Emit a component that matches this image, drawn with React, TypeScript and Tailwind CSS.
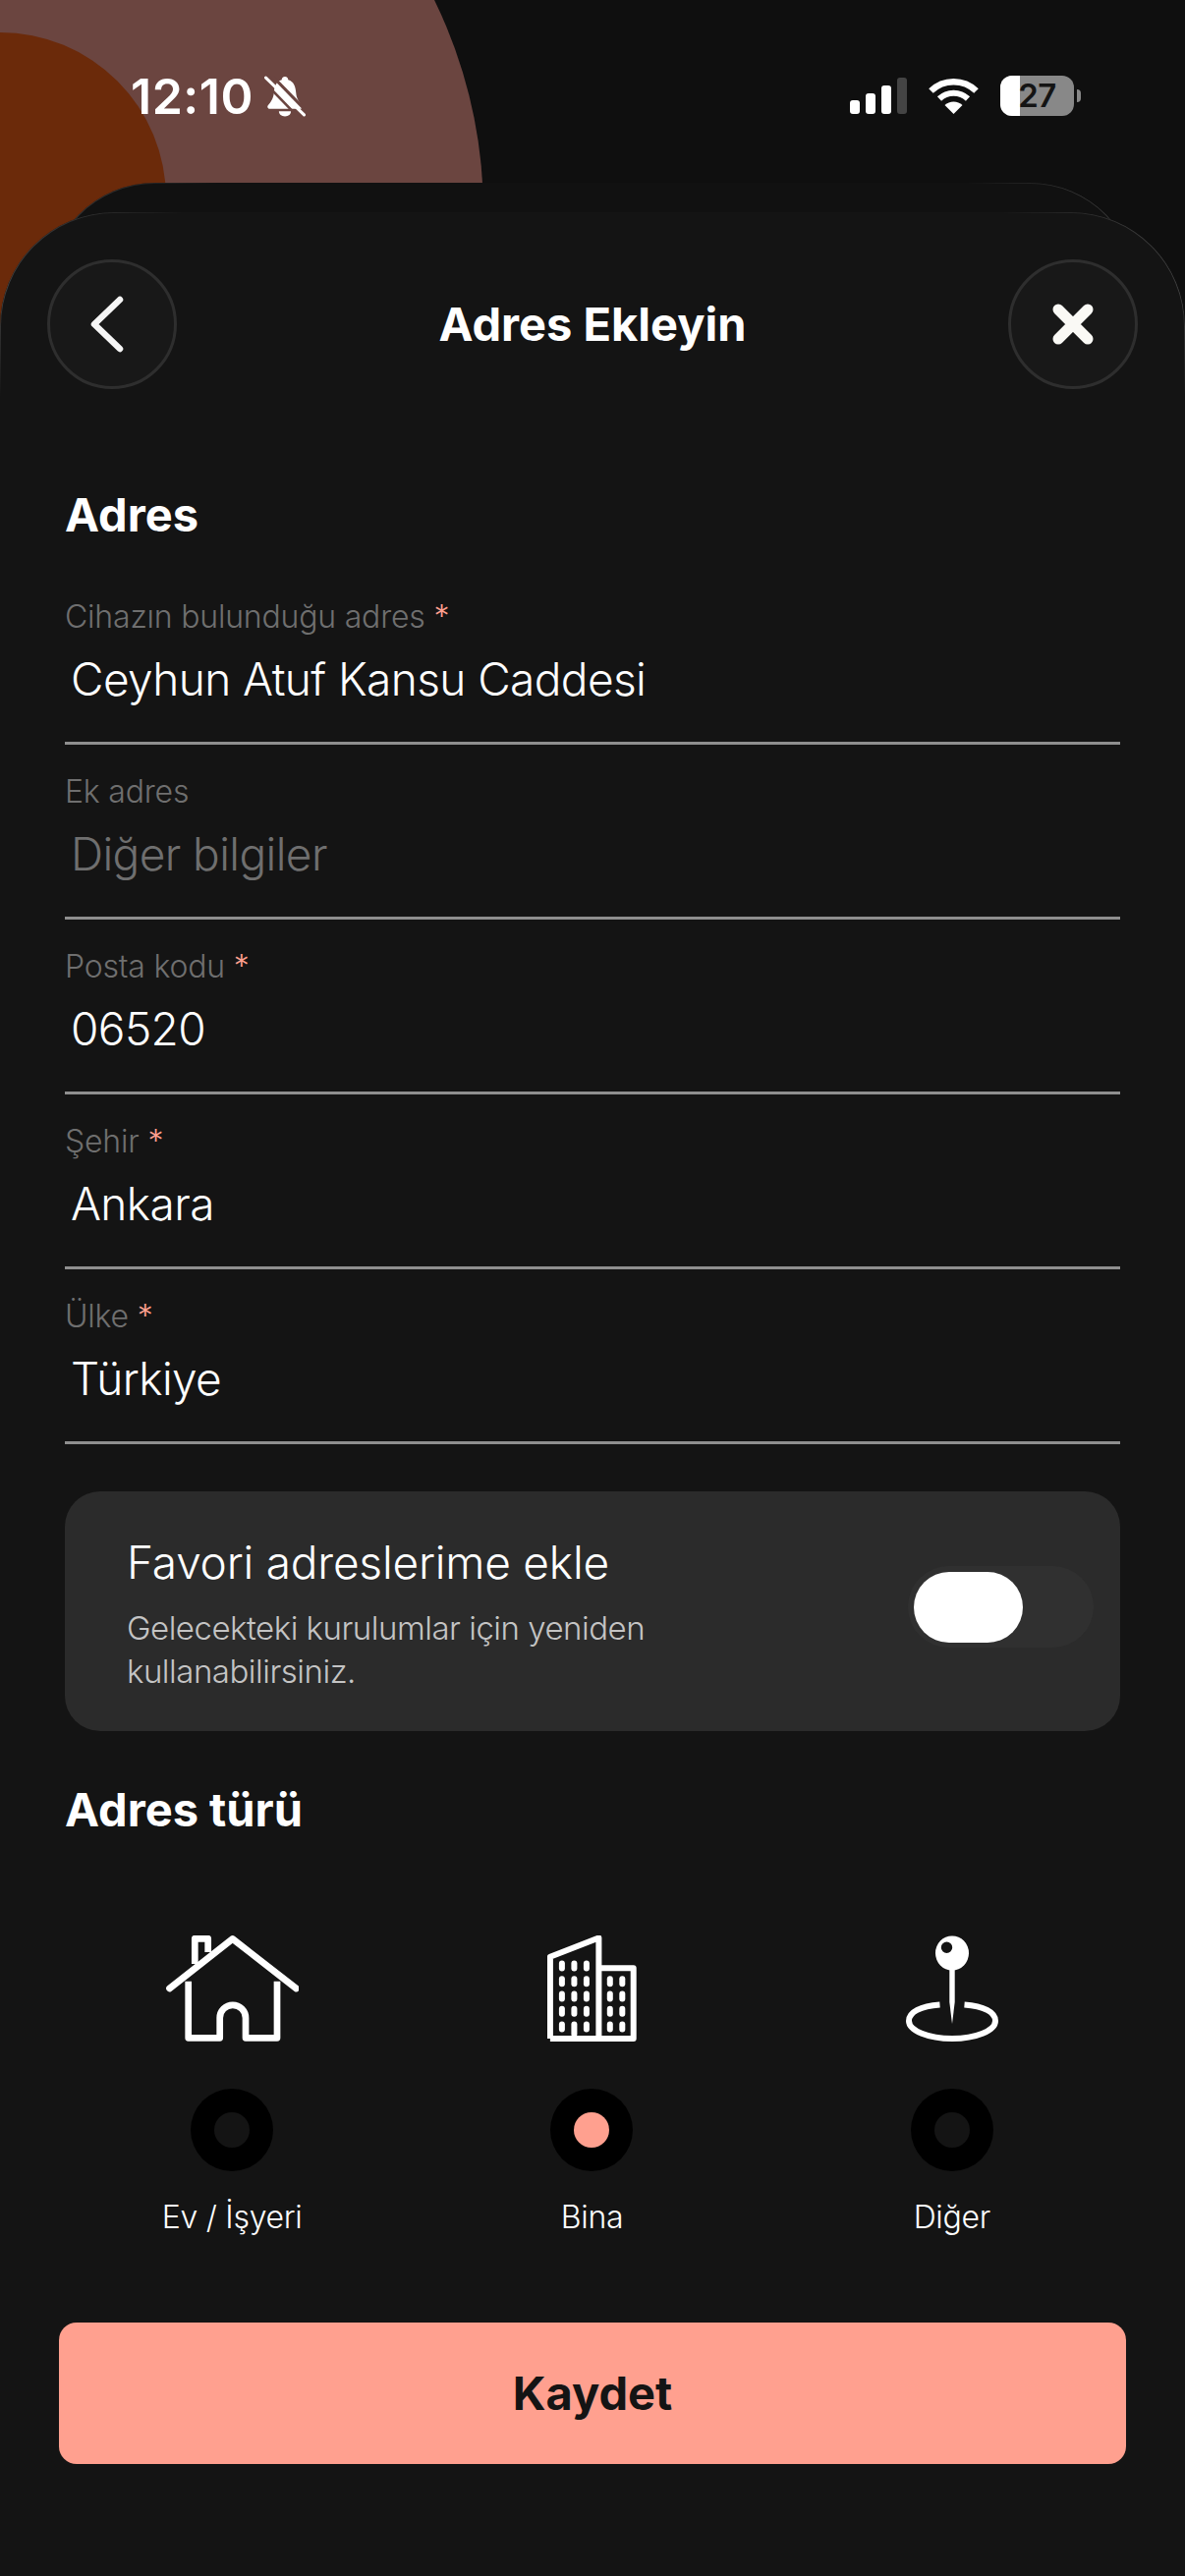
import React from "react";

function Bell() {
  return (
    <svg width="42" height="42" viewBox="0 0 40 41" className="ml-[11px]">
      <path d="M20 1c-2 0-3.2 1.400-3.200 3.200C11 6 9.500 11 9 17c-.5 6-3 9-5.800 12.500C2 31 3 33 5 33h30c2 0 3-2 1.800-3.500C34 26 31.500 23 31 17c-.5-6-2-11-7.800-12.800C23.200 2.400 22 1 20 1z" fill="#fff" />
      <path d="M14 35.500h12c0 3-2.500 5-6 5s-6-2-6-5z" fill="#fff" />
      <path d="M6 -1L42 36" stroke="#6b4540" strokeWidth="3" />
      <path d="M1 2L39 39" stroke="#fff" strokeWidth="3" strokeLinecap="round" />
      <path d="M-2 5L34 42" stroke="#6b4540" strokeWidth="2.500" />
    </svg>
  );
}

function Signal() {
  return (
    <div className="flex items-end gap-[6px] h-[37px]">
      <div className="w-[10px] h-[14px] rounded-[3px] bg-white" />
      <div className="w-[10px] h-[21px] rounded-[3px] bg-white" />
      <div className="w-[10px] h-[29px] rounded-[3px] bg-white" />
      <div className="w-[10px] h-[37px] rounded-[3px] bg-[#444444]" />
    </div>
  );
}

function Wifi() {
  return (
    <svg width="51" height="37" viewBox="0 0 51 37" fill="none">
      <path d="M2.500 13.500A33 33 0 0 1 48.500 13.500" stroke="#fff" strokeWidth="6.500" />
      <path d="M11 21.500A21 21 0 0 1 40 21.500" stroke="#fff" strokeWidth="6" />
      <path d="M25.500 37L16.500 28A13 13 0 0 1 34.500 28Z" fill="#fff" />
    </svg>
  );
}

function Battery() {
  return (
    <div className="flex items-center">
      <div className="relative w-[75px] h-[41px] rounded-[12px] overflow-hidden bg-[#888888] flex items-center justify-center">
        <div className="absolute left-0 top-0 bottom-0 w-[20px] bg-white" />
        <span className="relative text-[33px] leading-none font-semibold text-[#141414] tracking-[-0.5px]">27</span>
      </div>
      <div className="ml-[3px] w-[4px] h-[13px] rounded-r-full bg-[#888888]" />
    </div>
  );
}

function HouseIcon() {
  return (
    <svg width="135" height="108" viewBox="0 0 135 108" fill="none" stroke="#fff" strokeWidth="6.700" strokeLinejoin="round">
      <path d="M3.500 54L67.700 3.500L132.500 54" strokeLinecap="round" />
      <path d="M22.700 46.700V104.300H54.700V84a13.150 13.150 0 0 1 26.300 0V104.300H113V46.700" />
      <path d="M29.300 29V3.300H42.700V17" />
    </svg>
  );
}

function BuildingIcon() {
  const tall = [14.9, 27.4, 39.9];
  const short = [63.8, 76.3];
  const rows = [31, 46.7, 62, 77.3, 93];
  return (
    <svg width="91" height="108" viewBox="0 0 91 108" fill="none">
      <path d="M2.900 105V21.700L52.400 2.500V105M52.400 33.300H87.700V105H2.900" stroke="#fff" strokeWidth="6" strokeLinejoin="round" />
      {tall.map((x) =>
        rows.map((y) => (
          <rect key={x + "-" + y} x={x - 3} y={y - 5.5} width="6" height={x === 27.4 && y === 93 ? 16 : 11} rx="3" fill="#fff" />
        ))
      )}
      {short.map((x) =>
        rows.slice(1).map((y) => <rect key={x + "-" + y} x={x - 3} y={y - 5.5} width="6" height="11" rx="3" fill="#fff" />)
      )}
    </svg>
  );
}

function PinIcon() {
  return (
    <svg width="94" height="108" viewBox="0 0 94 108" fill="none">
      <path d="M34.500 70.500C15 72 3 78 3 87c0 10 20 18 44 18s44-8 44-18c0-9-12-15-31.500-16.500" stroke="#fff" strokeWidth="6" />
      <path d="M44.300 30h5.400v38l-2.700 22l-2.700-22z" fill="#fff" />
      <path fillRule="evenodd" clipRule="evenodd" d="M47 0.500a17 17.500 0 1 1 0 35a17 17.500 0 1 1 0-35zM41.500 6.500a5.700 5.700 0 1 0 0 11.400a5.700 5.700 0 1 0 0-11.400z" fill="#fff" />
    </svg>
  );
}

function Field({ label, value, required, placeholder }: { label: string; value: string; required?: boolean; placeholder?: boolean }) {
  return (
    <div className="h-[178px] border-b-[3px] border-[#8f8f8f] flex flex-col justify-end pb-[34px]">
      <div className="text-[32px] leading-[40px] text-[#6f6f6f] font-light tracking-[-0.2px]">
        {label}
        {required && <span className="text-[#ffa08f]"> *</span>}
      </div>
      <div
        className={
          "mt-[13px] pl-[6px] text-[46px] leading-[60px] tracking-[-0.6px] font-light " +
          (placeholder ? "text-[#6f6f6f]" : "text-white")
        }
      >
        {value}
      </div>
    </div>
  );
}

function AddressType({ icon, label, selected }: { icon: React.ReactNode; label: string; selected?: boolean }) {
  return (
    <div className="flex flex-col items-center">
      <div className="h-[108px] flex items-end">{icon}</div>
      <div className="mt-[48px] w-[84px] h-[84px] rounded-full bg-black flex items-center justify-center">
        <div className={"w-[36px] h-[36px] rounded-full " + (selected ? "bg-[#ffa08f]" : "bg-[#141414]")} />
      </div>
      <div className="mt-[25px] text-[32px] leading-[44px] text-white font-light tracking-[-0.3px]">{label}</div>
    </div>
  );
}

const cornerMask =
  "[mask-image:linear-gradient(90deg,black,transparent_16%,transparent_84%,black),linear-gradient(180deg,black_40%,transparent)] [mask-composite:intersect]";

export default function App() {
  return (
    <div className="relative w-[1206px] h-[2622px] overflow-hidden bg-[#0f0f0f] [font-family:Inter,sans-serif]">
      <div className="absolute left-[-492px] top-[-276px] w-[984px] h-[984px] rounded-full bg-[#6b4540]" />
      <div className="absolute left-[-169px] top-[33px] w-[338px] h-[338px] rounded-full bg-[#6b2a0a]" />

      <div className="relative h-[216px] pt-[77px] pl-[133px] pr-[106px] flex items-start justify-between">
        <div className="flex items-center h-[41px]">
          <span className="text-[50px] leading-none font-semibold text-white tracking-[0.5px]">12:10</span>
          <Bell />
        </div>
        <div className="flex items-center gap-[22px] h-[41px]">
          <Signal />
          <Wifi />
          <Battery />
        </div>
        <div className="absolute left-[48px] right-[48px] top-[186px] h-[200px] rounded-t-[110px] bg-[#111111]">
          <div className={"absolute inset-0 rounded-t-[110px] border-t border-x border-white/20 " + cornerMask} />
        </div>
      </div>

      <div className="relative h-[2406px] rounded-t-[116px] bg-[#141414] px-[66px] pt-[48px]">
        <div className={"absolute left-0 right-0 top-0 h-[190px] rounded-t-[116px] border-t border-x border-white/20 " + cornerMask} />

        <div className="relative -mx-[18px] flex items-center justify-between">
          <button className="w-[132px] h-[132px] rounded-full bg-[#181818] border-[3px] border-[#2e2e2e] flex items-center justify-center">
            <svg width="36" height="58" viewBox="0 0 36 58" fill="none" className="mr-[10px]">
              <path d="M31 4L5 29L31 54" stroke="#f5f5f5" strokeWidth="6.500" strokeLinecap="round" strokeLinejoin="round" />
            </svg>
          </button>
          <div className="text-[47px] leading-[60px] font-bold text-white">Adres Ekleyin</div>
          <button className="w-[132px] h-[132px] rounded-full bg-[#181818] border-[3px] border-[#2e2e2e] flex items-center justify-center">
            <svg width="44" height="44" viewBox="0 0 44 44" fill="none">
              <path d="M7 7L37 37M37 7L7 37" stroke="#faf9f5" strokeWidth="11" strokeLinecap="round" />
            </svg>
          </button>
        </div>

        <div className="mt-[98px] h-[60px] flex items-center text-[47px] font-bold text-white">Adres</div>

        <div className="mt-[26px] flex flex-col">
          <Field label="Cihazın bulunduğu adres" value="Ceyhun Atuf Kansu Caddesi" required />
          <Field label="Ek adres" value="Diğer bilgiler" placeholder />
          <Field label="Posta kodu" value="06520" required />
          <Field label="Şehir" value="Ankara" required />
          <Field label="Ülke" value="Türkiye" required />
        </div>

        <div className="mt-[48px] h-[244px] rounded-[36px] bg-[#2b2b2b] pl-[63px] pr-[27px] pt-[44px] flex items-start justify-between">
          <div className="w-[600px]">
            <div className="text-[46px] leading-[56px] text-white font-light tracking-[-0.2px]">Favori adreslerime ekle</div>
            <div className="mt-[17px] text-[33px] leading-[44px] text-[#c4c4c4] font-light tracking-[-0.5px]">
              Gelecekteki kurulumlar için yeniden kullanabilirsiniz.
            </div>
          </div>
          <div className="mt-[32px] w-[189px] h-[83px] rounded-full bg-[#303030] p-[6px] flex items-center">
            <div className="w-[111px] h-[72px] rounded-full bg-white" />
          </div>
        </div>

        <div className="mt-[50px] h-[60px] flex items-center text-[47px] font-bold text-white">Adres türü</div>

        <div className="mt-[98px] -ml-[13px] -mr-[12px] grid grid-cols-3">
          <AddressType icon={<HouseIcon />} label="Ev / İşyeri" />
          <AddressType icon={<BuildingIcon />} label="Bina" selected />
          <AddressType icon={<PinIcon />} label="Diğer" />
        </div>

        <button className="mt-[85px] -mx-[6px] w-[1086px] h-[144px] rounded-[18px] bg-[#ffa08f] flex items-center justify-center text-[47px] font-bold text-[#141414]">
          Kaydet
        </button>
      </div>
    </div>
  );
}
